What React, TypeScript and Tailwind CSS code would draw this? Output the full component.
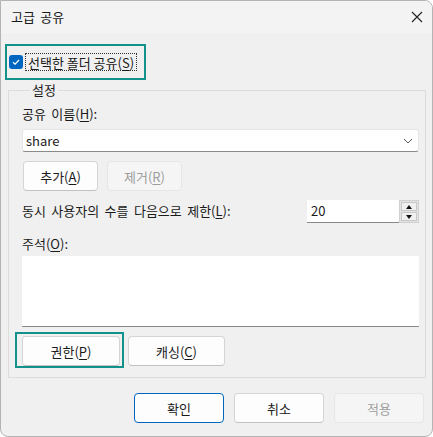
const font = { fontFamily: '"Noto Sans CJK KR", "Noto Sans", sans-serif' };

function Btn({
  children,
  w,
  disabled,
  primary,
}: {
  children: React.ReactNode;
  w: string;
  disabled?: boolean;
  primary?: boolean;
}) {
  const base = "h-[30px] rounded-[4px] border flex items-center justify-center text-[13px] leading-none";
  const look = disabled
    ? "bg-[#f5f5f5] border-[#e6e6e6] text-[#9d9d9d]"
    : primary
      ? "bg-[#fdfdfd] border-[#0067c0] text-[#1a1a1a]"
      : "bg-[#fdfdfd] border-[#d5d5d5] border-b-[#c2c2c2] text-[#1a1a1a]";
  return <div className={`${base} ${look} ${w}`}>{children}</div>;
}

function U({ children }: { children: React.ReactNode }) {
  return <span className="underline underline-offset-[2px]">{children}</span>;
}

export default function App() {
  return (
    <div className="w-[433px] h-[437px] bg-white [word-spacing:2.5px]" style={font}>
      <div className="w-[433px] h-[437px] flex flex-col border border-[#b4b4b4] rounded-[8px] rounded-tl-none overflow-hidden bg-[#f0f0f0] text-[#1a1a1a]">
        {/* Title bar */}
        <div className="h-[32px] shrink-0 bg-[#f3f3f3] flex items-center justify-between pl-[10px] pr-[10px]">
          <span className="text-[13px]">고급 공유</span>
          <svg width="12" height="12" viewBox="0 0 12 12" className="mr-[-1px]">
            <path d="M1 1L11 11M11 1L1 11" stroke="#222" strokeWidth="1.1" />
          </svg>
        </div>

        {/* Share checkbox */}
        <div className="mt-[11px] ml-[4px] w-[141px] h-[36px] border-2 border-[#12928a] flex items-center pl-[2px]">
          <div className="w-[14px] h-[14px] shrink-0 rounded-[3px] bg-[#0067c0] flex items-center justify-center">
            <svg width="10" height="10" viewBox="0 0 10 10">
              <path d="M2 5.2L4.1 7.2L8 3" stroke="#fff" strokeWidth="1.2" fill="none" />
            </svg>
          </div>
          <div className="ml-[2px] h-[18px] px-[2px] border border-dotted border-[#333] flex items-center text-[13px] leading-none whitespace-nowrap [word-spacing:0px]">
            선택한 폴더 공유(<U>S</U>)
          </div>
        </div>

        {/* Settings group */}
        <fieldset className="mt-[2px] ml-[7px] mr-[6px] border border-[#dcdcdc] pl-[13px] pr-[6px] pb-[9px]">
          <legend className="ml-[8px] px-[2px] text-[13px] leading-[16px]">설정</legend>
          <div className="mt-[8px] h-[16px] text-[13px] leading-[16px]">
            공유 이름(<U>H</U>):
          </div>
          <div className="mt-[7px] h-[23px] bg-white border border-[#e5e5e5] border-b-[#8a8a8a] rounded-[3px] flex items-center justify-between pl-[3px] pr-[5px]">
            <span className="text-[13px]">share</span>
            <svg width="10" height="6" viewBox="0 0 10 6">
              <path d="M1 1L5 5L9 1" stroke="#555" strokeWidth="1" fill="none" />
            </svg>
          </div>
          <div className="mt-[9px] flex gap-[9px] ml-[1px]">
            <Btn w="w-[75px]">
              추가(<U>A</U>)
            </Btn>
            <Btn w="w-[75px]" disabled>
              제거(<U>R</U>)
            </Btn>
          </div>
          <div className="mt-[9px] h-[23px] flex items-center justify-between">
            <span className="text-[13px] -mt-[2px]">
              동시 사용자의 수를 다음으로 제한(<U>L</U>):
            </span>
            <div className="flex h-[23px]">
              <div className="w-[92px] h-[23px] bg-white border-b border-[#8a8a8a] flex items-center pl-[4px] text-[13px]">
                20
              </div>
              <div className="w-[20px] h-[23px] bg-[#e3e3e3] border border-[#d0d0d0] flex flex-col p-[1px] gap-[1px]">
                <div className="flex-1 bg-[#f0f0f0] border border-[#c8c8c8] flex items-center justify-center">
                  <svg width="6" height="4" viewBox="0 0 6 4">
                    <path d="M3 0L6 4H0Z" fill="#111" />
                  </svg>
                </div>
                <div className="flex-1 bg-[#f0f0f0] border border-[#c8c8c8] flex items-center justify-center">
                  <svg width="6" height="4" viewBox="0 0 6 4">
                    <path d="M0 0H6L3 4Z" fill="#111" />
                  </svg>
                </div>
              </div>
            </div>
          </div>
          <div className="mt-[13px] h-[16px] text-[13px] leading-[16px]">
            주석(<U>O</U>):
          </div>
          <div className="mt-[4px] h-[71px] bg-white border-b border-[#8a8a8a]" />
          <div className="mt-[5px] flex items-start -ml-[7px]">
            <div className="w-[109px] h-[36px] border-2 border-[#12928a] pl-[5px] pt-[2px]">
              <Btn w="w-[98px]">
                권한(<U>P</U>)
              </Btn>
            </div>
            <div className="ml-[4px] mt-[4px]">
              <Btn w="w-[97px]">
                캐싱(<U>C</U>)
              </Btn>
            </div>
          </div>
        </fieldset>

        {/* Footer buttons */}
        <div className="mt-[15px] flex justify-end gap-[10px] pr-[8px]">
          <Btn w="w-[90px]" primary>
            확인
          </Btn>
          <Btn w="w-[90px]">취소</Btn>
          <Btn w="w-[90px]" disabled>
            적용
          </Btn>
        </div>
      </div>
    </div>
  );
}
